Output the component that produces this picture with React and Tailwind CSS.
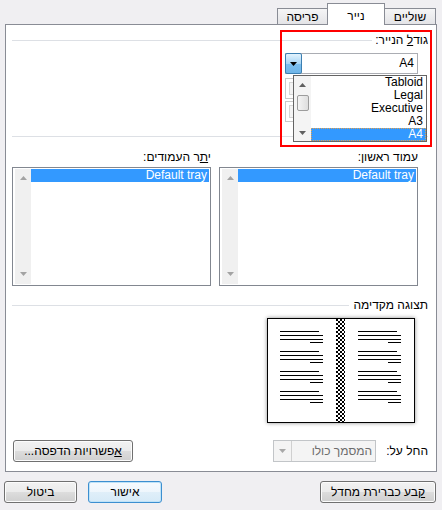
import React from 'react';

function Tri({ up, color = '#000', w = 7, h = 4 }) {
  return (
    <svg width={w} height={h} viewBox={`0 0 ${w} ${h}`} className="block">
      {up ? (
        <path d={`M0 ${h}H${w}L${w / 2} 0Z`} fill={color} />
      ) : (
        <path d={`M0 0H${w}L${w / 2} ${h}Z`} fill={color} />
      )}
    </svg>
  );
}

function Btn({ children, className = '', def = false }) {
  return (
    <div
      dir="rtl"
      className={`flex items-center justify-center h-[22px] rounded-[3px] border ${
        def
          ? 'border-[#3c8fd0] shadow-[inset_0_0_0_1px_#bfe3f8] bg-[linear-gradient(#f6fbfe_0%,#eef6fc_50%,#e0eff9_50%,#d6eaf7_100%)]'
          : 'border-[#707070] shadow-[inset_0_0_0_1px_#fcfcfc] bg-[linear-gradient(#f2f2f2_0%,#ebebeb_50%,#dddddd_50%,#cfcfcf_100%)]'
      } ${className}`}
    >
      {children}
    </div>
  );
}

function TrayList({ label }) {
  return (
    <div className="flex flex-col">
      <div dir="rtl" className="h-[14px] text-right">
        {label}
      </div>
      <div className="mt-[3px] h-[119px] border border-[#828790] bg-white flex p-px pl-[2px]">
        <div className="w-[16px] bg-[#f0f0f0] flex flex-col items-center justify-between pt-[7px] pb-[8px]">
          <Tri up color="#a3a3a3" w={7} h={4} />
          <Tri color="#a3a3a3" w={7} h={4} />
        </div>
        <div className="flex-1">
          <div className="h-[13px] leading-[13px] bg-[#3399ff] text-white text-right pr-[2px]">Default tray</div>
        </div>
      </div>
    </div>
  );
}

function Preview() {
  const groups = [0, 20, 40, 60];
  const rows = [
    [12, 39],
    [16, 43],
    [20, 43],
    [23, 13],
  ];
  return (
    <div className="ml-auto mr-[13px] mt-[6px] w-[148px] h-[105px] border border-black bg-white shadow-[0_0_4px_rgba(0,0,0,0.45)]">
      <svg width="146" height="103" viewBox="0 0 146 103" className="block">
        <defs>
          <pattern id="chk" width="4" height="4" patternUnits="userSpaceOnUse">
            <rect width="4" height="4" fill="#fff" />
            <rect width="2" height="2" fill="#000" />
            <rect x="2" y="2" width="2" height="2" fill="#000" />
          </pattern>
        </defs>
        <rect x="68" y="0" width="9" height="103" fill="url(#chk)" />
        {groups.map((g) =>
          rows.map(([y, w], i) => (
            <g key={`${g}-${i}`}>
              <rect x={i === 3 ? 42 : 12} y={g + y} width={w} height="1" fill="#000" />
              <rect x={i === 3 ? 120 : 90} y={g + y} width={w} height="1" fill="#000" />
            </g>
          ))
        )}
      </svg>
    </div>
  );
}

export default function App() {
  const sizes = ['Tabloid', 'Legal', 'Executive', 'A3', 'A4'];
  return (
    <div className="relative w-[442px] h-[510px] bg-[#f0eff2] font-['Liberation_Sans','DejaVu_Sans',sans-serif] text-[12px] leading-[14px] text-black overflow-hidden">
      {/* tabs */}
      <div className="flex justify-end items-end h-[24px] pr-[6px]">
        <div dir="rtl" className="w-[50px] h-[16px] border border-b-0 border-r-0 border-[#898c95] bg-[linear-gradient(#f5f5f6,#e4e4e7)] flex items-center justify-center pt-px">
          פריסה
        </div>
        <div dir="rtl" className="relative z-10 w-[58px] h-[22px] -mb-px border border-b-0 border-[#898c95] bg-white flex justify-center pt-[5px]">
          נייר
        </div>
        <div dir="rtl" className="w-[51px] h-[16px] border border-b-0 border-l-0 border-[#898c95] bg-[linear-gradient(#f5f5f6,#e4e4e7)] flex items-center justify-center pt-px">
          שוליים
        </div>
      </div>

      {/* panel */}
      <div className="ml-[5px] w-[432px] h-[448px] border border-[#898c95] bg-white pl-[6px] pr-[8px] pt-[8px] flex flex-col">
        {/* paper size */}
        <div className="flex items-center gap-[3px] h-[14px]">
          <div className="flex-1 h-px bg-[#dde0e5]" />
          <span dir="rtl">
            גוד<u>ל</u> הנייר:
          </span>
        </div>
        <div className="ml-auto mr-[10px] mt-[6px] w-[133px] flex flex-col">
          <div className="relative h-[21px] border border-[#abadb3] flex">
            <div className="w-[17px] -ml-px -my-px h-[21px] border border-[#3c7fb1] rounded-[2px] bg-[linear-gradient(#e3f3fd,#a9d6f5_50%,#7dbfee_50%,#6fb5e8)] flex items-center justify-center">
              <Tri w={7} h={4} />
            </div>
            <div className="flex-1 text-right pr-[3px] leading-[19px]">A4</div>

            {/* open list */}
            <div className="absolute left-[7px] top-[21px] w-[134px] h-[67px] border border-[#646464] bg-white flex z-20">
              <div className="w-[17px] bg-[#f4f4f4] flex flex-col items-center pt-[7px]">
                <Tri up color="#606060" w={7} h={4} />
                <div className="mt-[8px] w-[12px] h-[16px] rounded-[2px] border border-[#9c9c9c] bg-[linear-gradient(90deg,#f4f4f4,#dedede)]" />
                <div className="mt-auto mb-[6px]">
                  <Tri color="#606060" w={7} h={4} />
                </div>
              </div>
              <div className="flex-1 flex flex-col">
                {sizes.map((s) => (
                  <div
                    key={s}
                    className={`h-[13px] leading-[13px] text-right pr-[3px] ${
                      s === 'A4' ? 'bg-[#3399ff] text-white outline outline-1 outline-dotted outline-[#e0a050] -outline-offset-1' : ''
                    }`}
                  >
                    {s}
                  </div>
                ))}
              </div>
            </div>
          </div>
          <div className="mt-[4px] flex flex-col gap-[2px]">
            <div className="w-[40px] h-[21px] border border-[#c8c8c8] p-[3px]">
              <div className="w-full h-full border border-[#d6d6d6] bg-[#f4f4f4]" />
            </div>
            <div className="w-[40px] h-[21px] border border-[#c8c8c8] p-[3px]">
              <div className="w-full h-full border border-[#d6d6d6] bg-[#f4f4f4]" />
            </div>
          </div>
        </div>

        {/* paper source */}
        <div className="mt-[14px] h-px bg-[#dde0e5]" />
        <div className="mt-[13px] pr-[10px] grid grid-cols-2 gap-[8px]">
          <TrayList
            label={
              <>
                י<u>ת</u>ר העמודים:
              </>
            }
          />
          <TrayList label="עמוד ראשון:" />
        </div>

        {/* preview */}
        <div className="mt-[12px] flex items-center gap-[4px] h-[14px]">
          <div className="flex-1 h-px bg-[#dde0e5]" />
          <span dir="rtl">תצוגה מקדימה</span>
        </div>
        <Preview />

        {/* apply to */}
        <div className="mt-[17px] flex items-center h-[22px]">
          <Btn className="ml-px w-[120px]">
            <span>
              <u>א</u>פשרויות הדפסה...
            </span>
          </Btn>
          <div className="flex-1" />
          <div className="w-[103px] h-[22px] border border-[#c2c5c8] bg-[#f4f4f4] flex">
            <div className="w-[18px] border-r border-[#d0d0d0] flex items-center justify-center">
              <Tri color="#a8a8a8" w={7} h={4} />
            </div>
            <div dir="rtl" className="flex-1 text-right pr-[3px] leading-[20px] text-[#6d6d6d]">
              המסמך כולו
            </div>
          </div>
          <span dir="rtl" className="ml-[10px]">
            החל על:
          </span>
        </div>
      </div>

      {/* footer */}
      <div className="mt-[9px] flex pl-[4px] pr-[6px]">
        <Btn className="w-[73px]">ביטול</Btn>
        <Btn def className="ml-[11px] w-[74px]">
          אישור
        </Btn>
        <Btn className="ml-auto w-[116px]">
          <span>
            <u>ק</u>בע כברירת מחדל
          </span>
        </Btn>
      </div>

      {/* highlight frame */}
      <div className="absolute left-[280px] top-[30px] w-[152px] h-[117px] border-2 border-[#ff0000] z-30 pointer-events-none" />
    </div>
  );
}
